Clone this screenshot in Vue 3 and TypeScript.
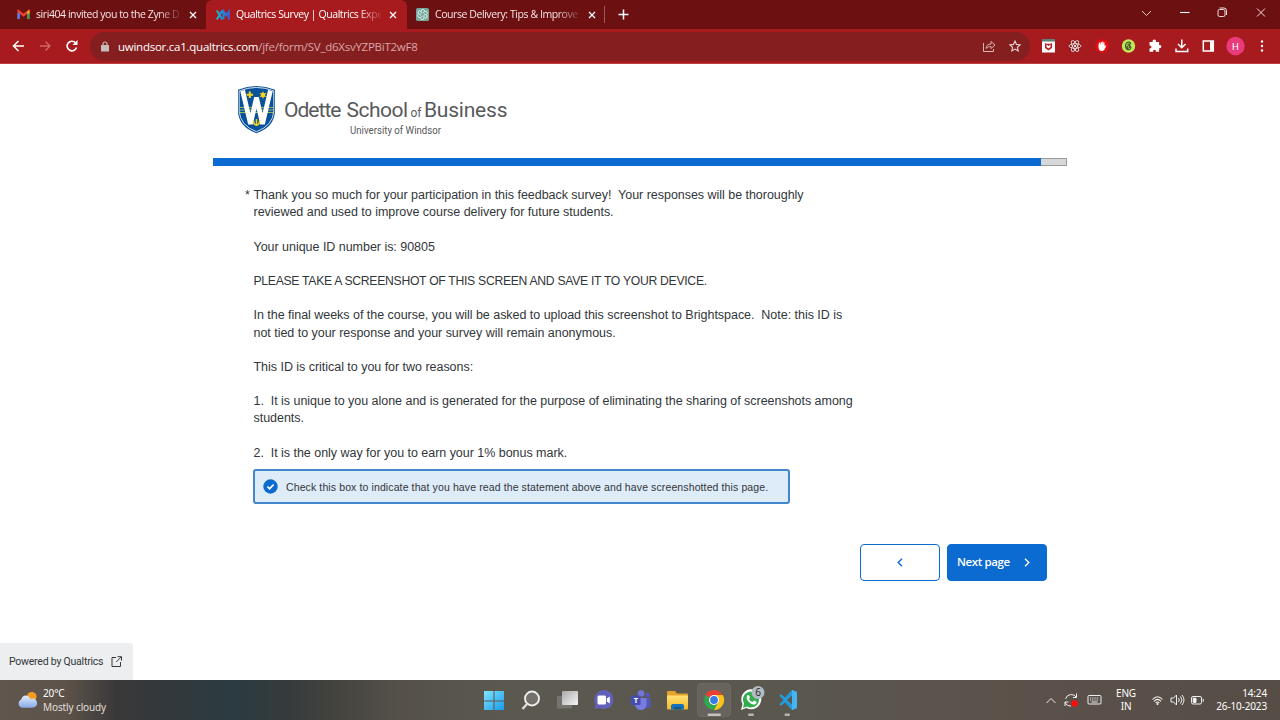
<script setup lang="ts">
interface Line { text: string; fit: string }

const lines: Line[] = [
  { text: 'Thank you so much for your participation in this feedback survey!\u00a0 Your responses will be thoroughly', fit: 'body' },
  { text: 'reviewed and used to improve course delivery for future students.', fit: 'body' },
  { text: '', fit: '' },
  { text: 'Your unique ID number is: 90805', fit: 'body' },
  { text: '', fit: '' },
  { text: 'PLEASE TAKE A SCREENSHOT OF THIS SCREEN AND SAVE IT TO YOUR DEVICE.', fit: 'caps' },
  { text: '', fit: '' },
  { text: 'In the final weeks of the course, you will be asked to upload this screenshot to Brightspace.\u00a0 Note: this ID is', fit: 'body' },
  { text: 'not tied to your response and your survey will remain anonymous.', fit: 'body' },
  { text: '', fit: '' },
  { text: 'This ID is critical to you for two reasons:', fit: 'body' },
  { text: '', fit: '' },
  { text: '1.\u00a0 It is unique to you alone and is generated for the purpose of eliminating the sharing of screenshots among', fit: 'body' },
  { text: 'students.', fit: 'body' },
  { text: '', fit: '' },
  { text: '2.\u00a0 It is the only way for you to earn your 1% bonus mark.', fit: 'body' },
]
const progress = 97.1
const petals = [0, 60, 120, 180, 240, 300]
</script>

<template>
  <div class="screen">
    <header class="tabs">
      <div class="tab first">
        <svg class="fav" viewBox="0 0 14 12"><path d="M1.700 11V2.500L7 6.800l5.300-4.300V11" fill="none" stroke="#ea4335" stroke-width="2.600"/><path d="M1.700 4.500V11" stroke="#4285f4" stroke-width="2.600"/><path d="M12.300 4.500V11" stroke="#34a853" stroke-width="2.600"/><path d="M11 3.300L13.600 1v4H11z" fill="#fbbc04"/></svg>
        <span class="title">siri404 invited you to the Zyne D</span>
        <svg class="x" viewBox="0 0 8 8"><path d="M1 1l6 6M7 1L1 7"/></svg>
      </div>
      <div class="tab active">
        <svg class="fav xm" viewBox="0 0 14 12"><defs><linearGradient id="xmg" gradientUnits="userSpaceOnUse" x1="0" x2="14" y1="0" y2="0"><stop offset="0" stop-color="#18c5c9"/><stop offset=".5" stop-color="#168bdc"/><stop offset="1" stop-color="#3a5be0"/></linearGradient></defs><path d="M.8 1.500l5.500 9M6.300 1.500l-5.500 9M7.500 10.500V2.500l2.600 4 2.700-4v8" fill="none" stroke="url(#xmg)" stroke-width="2"/></svg>
        <span class="title">Qualtrics Survey | Qualtrics Expe</span>
        <svg class="x" viewBox="0 0 8 8"><path d="M1 1l6 6M7 1L1 7"/></svg>
      </div>
      <div class="tab third">
        <svg class="fav gpt" viewBox="0 0 14 14"><rect width="14" height="14" rx="2" fill="#74aa9c"/><g fill="none" stroke="#fff" stroke-width=".8"><path v-for="a in petals" :key="a" d="M7 5.200L9.500 3.700a2 2 0 0 1 2.200 3.200" :transform="`rotate(${a} 7 7)`"/></g></svg>
        <span class="title">Course Delivery: Tips &amp; Improve</span>
        <svg class="x" viewBox="0 0 8 8"><path d="M1 1l6 6M7 1L1 7"/></svg>
      </div>
      <i class="sep"></i>
      <svg class="plus" viewBox="0 0 11 11"><path d="M5.500 .5v10M.5 5.500h10"/></svg>
      <svg class="win" viewBox="0 0 130 14" fill="none" stroke="#f0dede"><path d="M6 5l4.500 4.500L15 5" stroke-width=".9"/><path d="M44 6.500h9.500" stroke="#fff" stroke-width="1.100"/><rect x="82" y="3.500" width="7" height="7" rx="1.500"/><path d="M83.500 2h4.500q2.500 0 2.500 2.500V9"/><path d="M121 2.500l8 8M129 2.500l-8 8"/></svg>
    </header>

    <div class="toolbar">
      <svg class="nav" viewBox="0 0 70 16" fill="none"><path d="M12 8H1.500M6.500 3l-5 5 5 5" stroke="#fff" stroke-width="1.500"/><path d="M28 8h10M33.500 3.500L38 8l-4.500 4.500" stroke="#d46767" stroke-width="1.300"/><path d="M63.500 4.800A4.800 4.800 0 1 0 64.500 9.500" stroke="#fff" stroke-width="1.600"/><path d="M65.500 2v5h-5z" fill="#fff"/></svg>
      <div class="omnibox">
        <svg class="lock" viewBox="0 0 8 11"><path d="M0 4h8v6.500H0z" fill="#c7bcbc"/><path d="M2 4.500V3a2 2 0 0 1 4 0v1.500" fill="none" stroke="#c7bcbc" stroke-width="1.200"/></svg>
        <span class="url"><b>uwindsor.ca1.qualtrics.com</b>/jfe/form/SV_d6XsvYZPBiT2wF8</span>
        <svg class="share" viewBox="0 0 40 14" fill="none" stroke="#d6b4b4"><path d="M1.500 4v8.500h10V10M4 9.500c.4-3 2-4.500 5-4.500V2.500l4 3.500-4 3.500V7.500C7 7.500 5.500 8 4 9.500z"/><path d="M33 2l1.500 3.400 3.600.4-2.700 2.500.8 3.700-3.200-1.900-3.200 1.900.8-3.700-2.700-2.500 3.600-.4z" stroke="#ecd6d6" stroke-width="1.100"/></svg>
      </div>
      <svg class="ext" viewBox="0 0 240 20">
        <g><rect x="2" y="4" width="13" height="12.500" fill="#fff"/><path d="M2 3h13v2.500H2z" fill="#5e7f78"/><path d="M5 7l1.500.8h4L12 7v5l-3.500 2.500L5 12z" fill="#b51d25"/><path d="M6.500 8.500v2.500l2 1.500 2-1.500V8.500l-2 1.500z" fill="#fff"/></g>
        <circle cx="35" cy="10" r="6.500" fill="#7d1b1e"/><g fill="none" stroke="#f5dede" stroke-width=".9"><ellipse v-for="a in [0, 60, 120]" :key="a" cx="35" cy="10" rx="6" ry="2.300" :transform="`rotate(${a} 35 10)`"/></g><circle cx="35" cy="10" r="1.100" fill="#fff"/>
        <circle cx="62" cy="10" r="6.800" fill="#e80b10"/><path d="M58.500 8.500v3q.5 4 4 3.500 2-.5 3-3.500l.5-2.500-1.500 1V6.500h-1V9l-.3-3.500h-1V9l-.4-3h-1v3.500l-.6-3h-.9z" fill="#fff"/>
        <circle cx="88.500" cy="10" r="6.700" fill="#c1e75a"/><path d="M91 8c-1-3-5.500-2.500-5.500 2s5 4.500 5.500 2-4-3-4-1 3 1.500 3-1-1.500-2-2.500-1.500" fill="none" stroke="#3f5425" stroke-width="1.100"/>
        <path d="M109.500 6h3.200c-.8-3.200 4-3.200 3.200 0h3.200v3.200c3-.8 3 3.800 0 3v3.600h-3.300c.6-2.800-3.200-2.800-2.600 0h-3.700v-3.400c2.600.4 2.600-3.300 0-2.900z" fill="#fff"/>
        <path d="M141.800 3.500v8M138 8l3.800 3.800 3.800-3.800M136 12.500v3h11.700v-3" fill="none" stroke="#fff" stroke-width="1.500"/>
        <rect x="163.300" y="5" width="10" height="10" fill="none" stroke="#fff" stroke-width="1.500"/><path d="M170 5h4v10h-4z" fill="#fff"/>
        <circle cx="195.500" cy="10" r="9.200" fill="#e93b7c"/><text x="195.500" y="13.500" text-anchor="middle" font-size="9.500" fill="#fff">H</text>
        <g fill="#fff"><circle cx="222" cy="5.500" r="1.200"/><circle cx="222" cy="10" r="1.200"/><circle cx="222" cy="14.500" r="1.200"/></g>
      </svg>
    </div>

    <main class="page">
      <svg class="logo" viewBox="0 0 272 52">
        <defs><clipPath id="sh"><path d="M3.500 5.500Q20.500-1 37.500 5.500V25Q37 38 20.500 45 4 38 3.500 25z"/></clipPath></defs>
        <path d="M2 3.800Q20.500-3.600 39 3.800V25Q38.500 41 20.500 47.200 2.500 41 2 25z" fill="#09519a"/>
        <path d="M3.200 4.900Q20.500-2 37.800 4.900V25Q37 39.500 20.500 45.700 4 39.500 3.200 25z" fill="#09519a" stroke="#fff" stroke-width=".8"/>
        <g clip-path="url(#sh)"><path d="M3 21.500h35M3 24h35M3 26.500h35" stroke="#9cb855" stroke-width="1"/><path d="M6 2L14.500 38 20.500 11.500 26.500 38 35 2" fill="none" stroke="#fff" stroke-width="4.800" stroke-linejoin="bevel"/></g>
        <path d="M13.800 5.500v6.500M10.600 8.700h6.500" stroke="#f3d51d" stroke-width="2.100"/><path d="M27 5l1 2.300 2.500-.2-1.600 1.900 1.600 2-2.500-.2-1 2.200-1-2.200-2.500.2 1.600-2-1.600-1.900 2.500.2z" fill="#f3d51d"/>
        <path d="M17.500 34.500c0 6 6 6 6 0M20.500 33v7" stroke="#f3d51d" stroke-width="1.500" fill="none"/>
        <g class="logotext"><text x="48" y="30.500" font-size="21" textLength="57.500" lengthAdjust="spacing">Odette</text><text x="110.500" y="30.500" font-size="21" textLength="61.500" lengthAdjust="spacing">School</text><text x="174.500" y="30.500" font-size="12.500" textLength="11" lengthAdjust="spacingAndGlyphs">of</text><text x="188" y="30.500" font-size="21" textLength="83.500" lengthAdjust="spacing">Business</text><text x="114" y="47.500" font-size="10" textLength="91" lengthAdjust="spacingAndGlyphs">University of Windsor</text></g>
      </svg>

      <div class="progress"><i :style="{ width: progress + '%' }"></i></div>

      <section class="question">
        <span class="star">*</span>
        <div class="copy"><p v-for="(l, i) in lines" :key="i"><span :class="l.fit">{{ l.text }}</span></p></div>
      </section>

      <div class="choice">
        <svg viewBox="0 0 15 15"><circle cx="7.500" cy="7.500" r="7.200" fill="#0b6bd0"/><path d="M4.400 7.700l2.200 2L10.700 5.500" fill="none" stroke="#fff" stroke-width="1.700"/></svg>
        <span>Check this box to indicate that you have read the statement above and have screenshotted this page.</span>
      </div>

      <nav class="buttons">
        <div class="btn back"><svg viewBox="0 0 6 9"><path d="M5 .7L1.200 4.500 5 8.300"/></svg></div>
        <div class="btn next"><span>Next page</span><svg viewBox="0 0 6 9"><path d="M1 .7l3.800 3.800L1 8.300"/></svg></div>
      </nav>

      <div class="powered"><span>Powered by Qualtrics</span><svg viewBox="0 0 11 11"><path d="M5 1.500H1v9h8.500V6M6.500.7h4v4M10.300.9L5.200 6" fill="none" stroke="#333a40"/></svg></div>
    </main>

    <footer class="taskbar">
      <svg class="cloud" viewBox="0 0 22 18"><defs><linearGradient id="cl" x2="0" y2="1"><stop stop-color="#e5f0ff"/><stop offset="1" stop-color="#86a9e4"/></linearGradient></defs><circle cx="15.500" cy="5.500" r="5" fill="#f59b20"/><path d="M5 17a4.500 4.500 0 0 1-.5-8.500C5.500 3 12.500 3 14 8c4-1.500 7 1 7 4.500S18.500 17 16 17z" fill="url(#cl)"/></svg>
      <div class="weather"><span class="temp">20°C</span><span class="cond">Mostly cloudy</span></div>
      <svg class="apps" viewBox="0 0 330 40">
        <defs><linearGradient id="wi" x2="1" y2="1"><stop stop-color="#83e3fc"/><stop offset="1" stop-color="#169bed"/></linearGradient><linearGradient id="tv" x2="1" y2="1"><stop stop-color="#aaa"/><stop offset="1" stop-color="#f5f5f5"/></linearGradient><linearGradient id="fo" x2="0" y2="1"><stop stop-color="#ffe277"/><stop offset="1" stop-color="#f5b720"/></linearGradient></defs>
        <path d="M4 11h9.500v9.500H4zM14.500 11H24v9.500h-9.500zM4 21.500h9.500V30H4zM14.500 21.500H24V30h-9.500z" fill="url(#wi)"/>
        <circle cx="52" cy="18.500" r="7" fill="#74716c" stroke="#ededed" stroke-width="1.900"/><path d="M47 24l-4.500 5" stroke="#e0e0e0" stroke-width="2.300"/>
        <rect x="77" y="16" width="15" height="12.500" fill="#74736f"/><rect x="82" y="11" width="16" height="14" rx="1" fill="url(#tv)"/>
        <g transform="translate(9.500 0)"><path d="M105 29l1-5a9.500 9.500 0 1 1 4 4z" fill="#6260ba"/><rect x="108" y="15.500" width="8.500" height="9" rx="1.500" fill="#fff"/><path d="M117.300 18.500l3-2v7l-3-2z" fill="#fff"/></g>
        <g transform="translate(10 0)"><circle cx="151" cy="13.500" r="3.300" fill="#7176da"/><circle cx="157.500" cy="15" r="2.300" fill="#5558c0"/><path d="M155 18h5.500v7q-1 4-5.500 3z" fill="#5257b8"/><path d="M145 18h11.500v7q-1 5-5.700 5t-5.800-5z" fill="#777ce0"/><rect x="141" y="15.500" width="9.500" height="9.500" rx="1" fill="#474bb2"/><text x="145.800" y="23" text-anchor="middle" font-size="7.500" font-weight="700" fill="#fff">T</text></g>
        <path d="M187 12q0-1 1-1h7l2 2.500h10q1 0 1 1V20h-21z" fill="#e4a329"/><rect x="187" y="15.500" width="21" height="14" rx="1" fill="url(#fo)"/><path d="M191 29.500V26q0-2 2-2h9q2 0 2 2v3.500z" fill="#1471bb"/><path d="M194 27h7v2.500h-7z" fill="#155787"/>
        <rect x="217.500" y="3.500" width="33" height="33" rx="3.500" fill="#66645d" stroke="#706e67" stroke-width=".7"/>
        <circle cx="234" cy="20" r="10" fill="#30a74d"/><path d="M234 20L225.340 15A10 10 0 0 1 242.660 15z" fill="#e64034"/><path d="M234 15h8.700A10 10 0 0 1 234 30l4.500-8z" fill="#fbc31a"/><circle cx="234" cy="20" r="5" fill="#fff"/><circle cx="234" cy="20" r="3.900" fill="#3979e5"/>
        <rect x="227.500" y="33.500" width="13.500" height="2.500" rx="1.200" fill="#c2c1be"/>
        <path d="M261 30l1.500-6a10 10 0 1 1 4 4z" fill="#fff"/><path d="M263 28l1-4.500a8 8 0 1 1 3 3z" fill="#32ad4b"/><path d="M267 15.500q2-1.500 3 2l-1 1.500q1 2.500 3.500 3l1.500-1.500q3 .5 2.500 2.500-2 3-6.500 0-4.500-3.500-3-7.500z" fill="#fff"/><circle cx="278" cy="12.500" r="6.500" fill="#b2bbc3"/><text x="278" y="16.200" text-anchor="middle" font-size="10" fill="#20262a">6</text>
        <rect x="268" y="33.500" width="6" height="2.500" rx="1.200" fill="#b6b5b2"/>
        <path d="M312 10l5 2v16l-5 2-7-7.500-4 3.200-2-1.300 4.500-4.400-4.500-4.400 2-1.300 4 3.200zM312 15.500l-5 4.500 5 4.500z" fill="#249bdc" fill-rule="evenodd"/><path d="M312 10l5 2v16l-5 2z" fill="#46b4f2"/>
        <rect x="304.500" y="33.500" width="5.500" height="2.500" rx="1.200" fill="#b6b5b2"/>
      </svg>
      <div class="tray">
        <svg class="ticons" viewBox="0 0 60 20" fill="none" stroke="#eee"><path d="M1.500 13L6 8.500l4.500 4.500"/><path d="M20.500 9A6 6 0 0 1 31.500 7.500V3.500M31.500 7.500H28M20 16v-4h3.500M20 12a6 6 0 0 0 6 4"/><circle cx="29.500" cy="13.500" r="3.200" fill="#ff0d0d" stroke="none"/><rect x="43" y="5.500" width="13" height="8.500" rx="1"/><path d="M45 8h9M45 10h9" stroke-dasharray="1.200 1"/><path d="M46.500 12h6"/></svg>
        <div class="lang"><span>ENG</span><span>IN</span></div>
        <svg class="status" viewBox="0 0 54 16" fill="none" stroke="#eee"><path d="M1.500 7.500Q6.500 2 11.500 7.500M3 9.300Q6.500 5.500 10 9.300M4.700 11Q6.500 9 8.300 11" stroke-width="1.100"/><circle cx="6.500" cy="12" r="1" fill="#fff" stroke="none"/><path d="M20 6h2.500l3-3v10l-3-3H20zM27.500 6q1.500 2 0 4M29.500 4.500q3 3.500 0 7M31 3q4 5 0 10"/><rect x="40.500" y="4.500" width="10" height="7.500" rx="1.500"/><path d="M42.200 6.200H45v4.200h-2.800z" fill="#fff"/><path d="M52.200 6.800v3"/></svg>
        <div class="clock"><span>14:24</span><span class="date">26-10-2023</span></div>
      </div>
    </footer>
  </div>
</template>

<style>
html, body { margin: 0; background: #fff; overflow: hidden; }
</style>

<style scoped>
.screen { width: 1280px; height: 720px; display: flex; flex-direction: column; overflow: hidden; background: #fff; font-family: "Open Sans", "Noto Sans", sans-serif; box-sizing: border-box; }
.screen * { box-sizing: border-box; }
svg { display: block; flex: none; }
span { white-space: nowrap; }
.tabs { height: 29px; flex: none; background: #6c1012; display: flex; align-items: center; color: #f4e6e6; }
.tab { height: 29px; display: flex; align-items: center; font-size: 10.500px; }
.first { width: 206px; padding-left: 17px; }
.active { width: 201px; padding-left: 10px; background: #a71b1e; border-radius: 6px 6px 0 0; color: #fff; }
.third { width: 197px; padding-left: 9px; }
.fav { width: 13px; height: 11px; margin-right: 6px; }
.xm { width: 14px; height: 12px; }
.gpt { width: 13px; height: 13px; }
.title { width: 145px; padding-bottom: 1px; letter-spacing: -.430px; -webkit-mask-image: linear-gradient(90deg, #000 84%, rgba(0, 0, 0, .15) 99%); mask-image: linear-gradient(90deg, #000 84%, rgba(0, 0, 0, .15) 99%); }
.x { width: 8px; height: 8px; margin-left: 8px; stroke: #fff; stroke-width: 1.3; }
.sep { width: 1px; height: 17px; background: #98595a; }
.plus { width: 11px; height: 11px; margin-left: 13px; stroke: #fff; stroke-width: 1.5; fill: none; }
.win { width: 130px; height: 14px; margin-left: auto; margin-right: 14px; margin-bottom: 3px; }
.toolbar { height: 35px; flex: none; display: flex; align-items: center; background: #a71b1e; border-bottom: 1px solid #bd3f40; }
.nav { width: 70px; height: 16px; margin-left: 12px; margin-right: 8px; }
.omnibox { width: 940px; height: 29px; border-radius: 15px; background: #841e1f; display: flex; align-items: center; padding-left: 11px; color: #dba6a7; }
.lock { width: 8px; height: 11px; }
.url { margin-left: 9px; font-size: 11.500px; letter-spacing: -.250px; flex: 1; }
.url b { font-weight: 400; color: #fff; }
.share { width: 40px; height: 14px; margin-right: 8px; }
.ext { width: 240px; height: 20px; margin-left: 10px; font-family: Roboto, sans-serif; }
.page { height: 616px; flex: none; padding: 22px 213px 0; }
.logo { width: 272px; height: 52px; margin-left: 23px; font-family: Roboto, sans-serif; }
.logotext { fill: #58595b; }
.progress { height: 8px; margin-top: 20px; background: #d5d7d8; border: 1px solid #9b9b9b; border-left: 0; }
.progress i { display: block; height: 8px; margin-top: -1px; background: #0b6bd0; }
.question { display: flex; height: 274px; margin-top: 21px; padding-left: 32px; font-family: "Liberation Sans", sans-serif; font-size: 12.500px; line-height: 17.200px; color: #32363a; }
.star { width: 8.500px; }
p { height: 17.200px; margin: 0; }
.body { letter-spacing: -.030px; }
.caps { font-size: 12.200px; letter-spacing: -.290px; }
.choice { margin: 8px 0 0 40px; width: 537px; height: 35px; border: 2px solid #4387cc; border-radius: 3px; background: #deebf8; display: flex; align-items: center; padding-left: 8px; font-family: "Liberation Sans", sans-serif; font-size: 10.500px; letter-spacing: .113px; color: #32363a; }
.choice svg { width: 15px; height: 15px; margin-right: 8px; }
.buttons { display: flex; gap: 7px; margin: 40px 20px 0 647px; }
.btn { height: 37px; display: flex; align-items: center; border: 1px solid #0b6bd0; border-radius: 4px; color: #fff; font-size: 11.500px; font-weight: 600; letter-spacing: -.400px; }
.btn span { padding-bottom: 2px; }
.btn svg { width: 6px; height: 9px; margin-bottom: 1px; fill: none; stroke: #0b6bd0; stroke-width: 1.400; }
.back { width: 80px; justify-content: center; }
.next { width: 100px; padding-left: 9px; background: #0b6bd0; }
.btn.next svg { stroke: #fff; margin-left: 14px; }
.powered { width: 133px; height: 37px; margin: 62px 0 0 -213px; border-radius: 0 3px 0 0; background: #eceef0; display: flex; align-items: center; padding-left: 9px; font-family: Roboto, sans-serif; font-size: 10.500px; letter-spacing: -.220px; color: #32363a; }
.powered svg { width: 11px; height: 11px; margin-left: 8px; }
.taskbar { height: 40px; flex: none; display: flex; align-items: center; background: linear-gradient(90deg, #61564d 0, #5e534a 65px, #3a3939 115px, #33383b 160px, #2b3b41 235px, #363b3c 290px, #45443f 340px, #55514a 400px, #5b5850 500px, #5a574f 800px, #5b514a 1030px, #564d47 1280px); color: #fff; font-family: "Noto Sans", sans-serif; }
.cloud { width: 21px; height: 18px; margin-left: 17px; }
.weather { display: flex; flex-direction: column; margin-left: 5px; margin-top: 1px; width: 87px; font-size: 10px; line-height: 13.500px; letter-spacing: -.120px; }
.cond { color: #e0deda; }
.apps { width: 330px; height: 40px; margin-left: 350px; font-family: "Open Sans", sans-serif; }
.tray { margin-left: auto; margin-right: 13px; display: flex; align-items: center; font-size: 10px; }
.ticons { width: 60px; height: 20px; }
.lang { width: 30px; display: flex; flex-direction: column; align-items: center; margin-left: 6px; line-height: 13px; letter-spacing: -.200px; }
.status { width: 54px; height: 16px; margin-left: 10px; }
.clock { display: flex; flex-direction: column; align-items: flex-end; width: 62px; line-height: 13px; letter-spacing: -.150px; }
</style>
